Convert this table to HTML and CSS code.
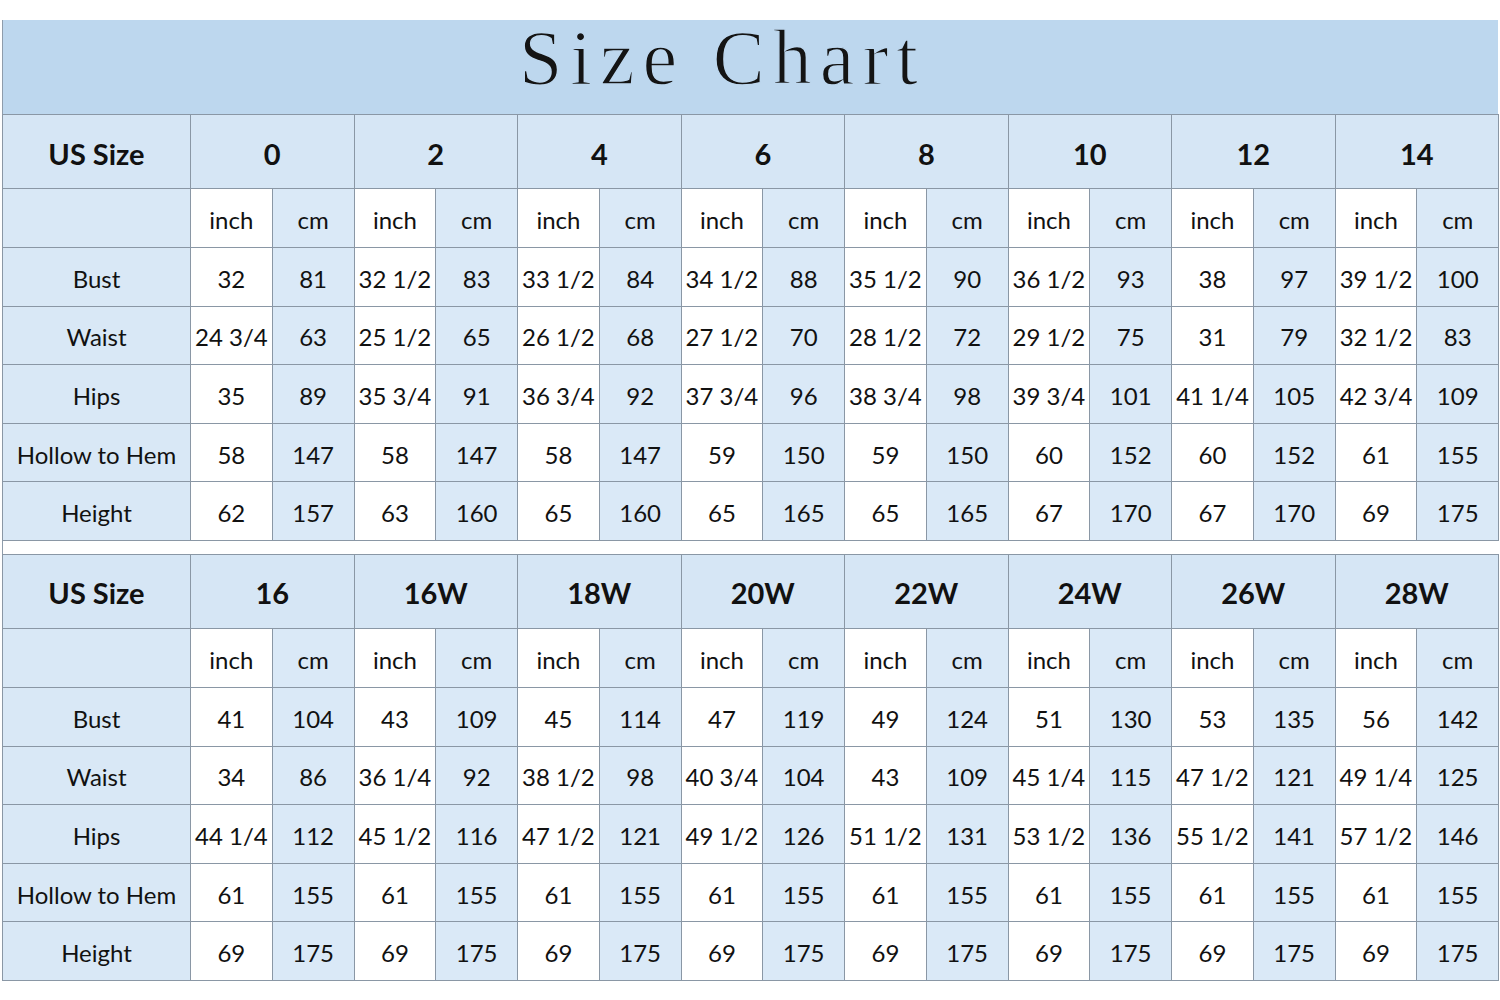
FILE: index.html
```html
<!DOCTYPE html>
<html>
<head>
<meta charset="utf-8">
<link rel="stylesheet" href="styles.css">
</head>
<body>
<div class="chart">
  <div class="title">Size Chart</div>
  <table class="sizes">
    <colgroup><col class="c-label"><col span="16" class="c-val"></colgroup>
    <tr class="r-head"><th class="lab">US Size</th><th colspan="2">0</th><th colspan="2">2</th><th colspan="2">4</th><th colspan="2">6</th><th colspan="2">8</th><th colspan="2">10</th><th colspan="2">12</th><th colspan="2">14</th></tr>
    <tr class="r-sub"><td class="lab"></td><td class="in">inch</td><td class="cm">cm</td><td class="in">inch</td><td class="cm">cm</td><td class="in">inch</td><td class="cm">cm</td><td class="in">inch</td><td class="cm">cm</td><td class="in">inch</td><td class="cm">cm</td><td class="in">inch</td><td class="cm">cm</td><td class="in">inch</td><td class="cm">cm</td><td class="in">inch</td><td class="cm">cm</td></tr>
    <tr class="r-data"><td class="lab">Bust</td><td class="in">32</td><td class="cm">81</td><td class="in">32 1/2</td><td class="cm">83</td><td class="in">33 1/2</td><td class="cm">84</td><td class="in">34 1/2</td><td class="cm">88</td><td class="in">35 1/2</td><td class="cm">90</td><td class="in">36 1/2</td><td class="cm">93</td><td class="in">38</td><td class="cm">97</td><td class="in">39 1/2</td><td class="cm">100</td></tr>
    <tr class="r-data"><td class="lab">Waist</td><td class="in">24 3/4</td><td class="cm">63</td><td class="in">25 1/2</td><td class="cm">65</td><td class="in">26 1/2</td><td class="cm">68</td><td class="in">27 1/2</td><td class="cm">70</td><td class="in">28 1/2</td><td class="cm">72</td><td class="in">29 1/2</td><td class="cm">75</td><td class="in">31</td><td class="cm">79</td><td class="in">32 1/2</td><td class="cm">83</td></tr>
    <tr class="r-data"><td class="lab">Hips</td><td class="in">35</td><td class="cm">89</td><td class="in">35 3/4</td><td class="cm">91</td><td class="in">36 3/4</td><td class="cm">92</td><td class="in">37 3/4</td><td class="cm">96</td><td class="in">38 3/4</td><td class="cm">98</td><td class="in">39 3/4</td><td class="cm">101</td><td class="in">41 1/4</td><td class="cm">105</td><td class="in">42 3/4</td><td class="cm">109</td></tr>
    <tr class="r-data"><td class="lab">Hollow to Hem</td><td class="in">58</td><td class="cm">147</td><td class="in">58</td><td class="cm">147</td><td class="in">58</td><td class="cm">147</td><td class="in">59</td><td class="cm">150</td><td class="in">59</td><td class="cm">150</td><td class="in">60</td><td class="cm">152</td><td class="in">60</td><td class="cm">152</td><td class="in">61</td><td class="cm">155</td></tr>
    <tr class="r-data"><td class="lab">Height</td><td class="in">62</td><td class="cm">157</td><td class="in">63</td><td class="cm">160</td><td class="in">65</td><td class="cm">160</td><td class="in">65</td><td class="cm">165</td><td class="in">65</td><td class="cm">165</td><td class="in">67</td><td class="cm">170</td><td class="in">67</td><td class="cm">170</td><td class="in">69</td><td class="cm">175</td></tr>
  </table>
  <div class="gap"></div>
  <table class="sizes">
    <colgroup><col class="c-label"><col span="16" class="c-val"></colgroup>
    <tr class="r-head"><th class="lab">US Size</th><th colspan="2">16</th><th colspan="2">16W</th><th colspan="2">18W</th><th colspan="2">20W</th><th colspan="2">22W</th><th colspan="2">24W</th><th colspan="2">26W</th><th colspan="2">28W</th></tr>
    <tr class="r-sub"><td class="lab"></td><td class="in">inch</td><td class="cm">cm</td><td class="in">inch</td><td class="cm">cm</td><td class="in">inch</td><td class="cm">cm</td><td class="in">inch</td><td class="cm">cm</td><td class="in">inch</td><td class="cm">cm</td><td class="in">inch</td><td class="cm">cm</td><td class="in">inch</td><td class="cm">cm</td><td class="in">inch</td><td class="cm">cm</td></tr>
    <tr class="r-data"><td class="lab">Bust</td><td class="in">41</td><td class="cm">104</td><td class="in">43</td><td class="cm">109</td><td class="in">45</td><td class="cm">114</td><td class="in">47</td><td class="cm">119</td><td class="in">49</td><td class="cm">124</td><td class="in">51</td><td class="cm">130</td><td class="in">53</td><td class="cm">135</td><td class="in">56</td><td class="cm">142</td></tr>
    <tr class="r-data"><td class="lab">Waist</td><td class="in">34</td><td class="cm">86</td><td class="in">36 1/4</td><td class="cm">92</td><td class="in">38 1/2</td><td class="cm">98</td><td class="in">40 3/4</td><td class="cm">104</td><td class="in">43</td><td class="cm">109</td><td class="in">45 1/4</td><td class="cm">115</td><td class="in">47 1/2</td><td class="cm">121</td><td class="in">49 1/4</td><td class="cm">125</td></tr>
    <tr class="r-data"><td class="lab">Hips</td><td class="in">44 1/4</td><td class="cm">112</td><td class="in">45 1/2</td><td class="cm">116</td><td class="in">47 1/2</td><td class="cm">121</td><td class="in">49 1/2</td><td class="cm">126</td><td class="in">51 1/2</td><td class="cm">131</td><td class="in">53 1/2</td><td class="cm">136</td><td class="in">55 1/2</td><td class="cm">141</td><td class="in">57 1/2</td><td class="cm">146</td></tr>
    <tr class="r-data"><td class="lab">Hollow to Hem</td><td class="in">61</td><td class="cm">155</td><td class="in">61</td><td class="cm">155</td><td class="in">61</td><td class="cm">155</td><td class="in">61</td><td class="cm">155</td><td class="in">61</td><td class="cm">155</td><td class="in">61</td><td class="cm">155</td><td class="in">61</td><td class="cm">155</td><td class="in">61</td><td class="cm">155</td></tr>
    <tr class="r-data"><td class="lab">Height</td><td class="in">69</td><td class="cm">175</td><td class="in">69</td><td class="cm">175</td><td class="in">69</td><td class="cm">175</td><td class="in">69</td><td class="cm">175</td><td class="in">69</td><td class="cm">175</td><td class="in">69</td><td class="cm">175</td><td class="in">69</td><td class="cm">175</td><td class="in">69</td><td class="cm">175</td></tr>
  </table>
</div>
</body>
</html>
```

FILE: styles.css
```css
html, body {
  margin: 0;
  padding: 0;
  background: #ffffff;
}
.chart {
  width: 1496px;
  margin: 20px 0 0 2px;
  font-family: Lato, "Open Sans", sans-serif;
  color: #111111;
}
.title {
  box-sizing: border-box;
  height: 94px;
  background: #bdd7ee;
  border-left: 1px solid #8e9cab;
  font-family: "Liberation Serif", serif;
  font-size: 78px;
  line-height: 76px;
  padding: 0 56px 18px 0;
  letter-spacing: 8px;
  text-align: center;
  color: #141414;
  -webkit-text-stroke: 1.4px #bdd7ee;
}
.sizes {
  border-collapse: collapse;
  table-layout: fixed;
  width: 1496px;
}
.c-label { width: 188px; }
.c-val { width: 81.75px; }
.sizes th, .sizes td {
  border: 1.5px solid #8a97a5;
  text-align: center;
  vertical-align: middle;
  padding: 3px 0 0 0;
  white-space: nowrap;
  overflow: hidden;
}
.sizes th {
  font-weight: 700;
  font-size: 29px;
  background: #d6e6f5;
}
.sizes td {
  font-size: 24px;
}
.r-head { height: 74px; }
.r-sub { height: 59px; }
.r-data { height: 58.6px; }
.lab { background: #d9e8f6; }
.in { background: #ffffff; }
.cm { background: #dae9f7; }
.gap {
  height: 13px;
  border-left: 1px solid #8e9cab;
}
```
